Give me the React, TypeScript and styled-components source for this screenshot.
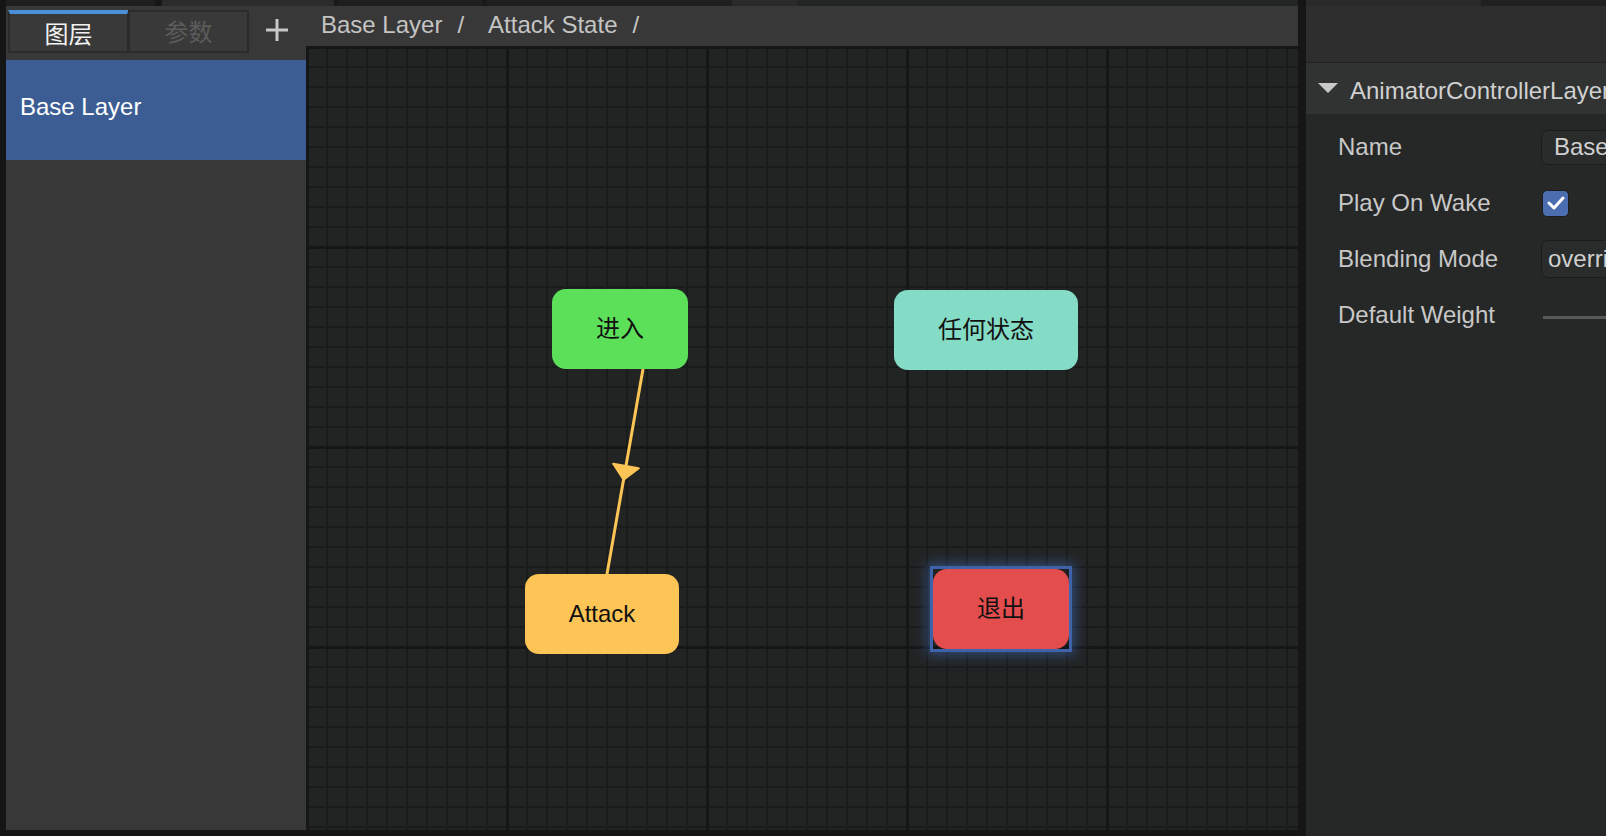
import React from "react";
import styled, { createGlobalStyle } from "styled-components";

const GlobalStyle = createGlobalStyle`
  html, body { margin: 0; padding: 0; background: #151515; }
  body { font-family: "Liberation Sans", Arial, "Noto Sans CJK SC", sans-serif; }
  * { box-sizing: border-box; }
`;

const Screen = styled.div`
  width: 1606px;
  height: 836px;
  overflow: hidden;
  display: flex;
  flex-direction: column;
  background: #151515;
`;

const TopStrip = styled.div`
  display: flex;
  height: 6px;
  flex-shrink: 0;
`;

const StripSeg = styled.div<{ $w: number; $c: string }>`
  width: ${(p) => p.$w}px;
  background: ${(p) => p.$c};
  flex-shrink: 0;
`;

const Body = styled.div`
  display: flex;
  flex: 1;
  min-height: 0;
`;

const EditorArea = styled.div`
  width: 1298px;
  display: flex;
  padding: 0 0 6px 6px;
  background: #151515;
`;

const LayerPanel = styled.div`
  width: 300px;
  background: #383838;
  display: flex;
  flex-direction: column;
`;

const TabBar = styled.div`
  height: 54px;
  display: flex;
  align-items: flex-start;
  padding: 4px 0 0 2px;
`;

const Tab = styled.div<{ $active?: boolean }>`
  width: 121px;
  height: 43px;
  margin-left: ${(p) => (p.$active ? 0 : -1)}px;
  border: 2px solid #2b2b2b;
  border-top: ${(p) => (p.$active ? "4px solid #4a90d9" : "2px solid #2b2b2b")};
  background: #393939;
  display: flex;
  align-items: center;
  justify-content: center;
  font-size: 24px;
  line-height: 1;
  color: ${(p) => (p.$active ? "#f2f2f2" : "#5c5c5c")};
  font-family: "Noto Sans CJK SC", sans-serif;
  padding-bottom: ${(p) => (p.$active ? 0 : 2)}px;
`;

const AddButton = styled.div`
  width: 22px;
  height: 22px;
  margin: 9px 0 0 17px;
  display: flex;
`;

const LayerItem = styled.div<{ $selected?: boolean }>`
  height: 100px;
  background: ${(p) => (p.$selected ? "#3c5d93" : "transparent")};
  color: #ffffff;
  font-size: 24px;
  display: flex;
  align-items: center;
  padding: 0 0 7px 14px;
`;

const GraphArea = styled.div`
  flex: 1;
  display: flex;
  flex-direction: column;
  min-width: 0;
`;

const Breadcrumb = styled.div`
  height: 40px;
  flex-shrink: 0;
  background: #383838;
  display: flex;
  align-items: center;
  padding: 0 0 3px 15px;
  color: #c4c4c4;
  font-size: 24px;
  white-space: nowrap;
`;

const Crumb = styled.span``;

const CrumbSep = styled.span`
  margin: 0 24px 0 15px;
`;

const Canvas = styled.div`
  position: relative;
  flex: 1;
  overflow: hidden;
  background-color: #222424;
  background-image:
    linear-gradient(to right, #151616 0 3px, transparent 3px),
    linear-gradient(to bottom, #151616 0 3px, transparent 3px),
    linear-gradient(to right, #1a1b1b 0 2px, transparent 2px),
    linear-gradient(to bottom, #1a1b1b 0 2px, transparent 2px);
  background-size: 200px 200px, 200px 200px, 20px 20px, 20px 20px;
`;

const EdgeLayer = styled.svg`
  position: absolute;
  left: 0;
  top: 0;
  width: 100%;
  height: 100%;
  pointer-events: none;
`;

const StateNode = styled.div<{
  $x: number;
  $y: number;
  $w: number;
  $bg: string;
  $selected?: boolean;
}>`
  position: absolute;
  left: ${(p) => p.$x}px;
  top: ${(p) => p.$y}px;
  width: ${(p) => p.$w}px;
  height: 80px;
  border-radius: 14px;
  background: ${(p) => p.$bg};
  color: #111111;
  font-size: 24px;
  line-height: 1;
  display: flex;
  align-items: center;
  justify-content: center;
  &::after {
    content: "";
    position: absolute;
    inset: 0;
    display: ${(p) => (p.$selected ? "block" : "none")};
    box-shadow: 0 0 0 3px #3e63a8, 0 0 12px 6px rgba(62, 99, 168, 0.6);
  }
`;

const Separator = styled.div`
  width: 8px;
  background: #161616;
  flex-shrink: 0;
`;

const RightPanel = styled.div`
  width: 300px;
  background: #262727;
  display: flex;
  flex-direction: column;
  overflow: hidden;
`;

const PanelTop = styled.div`
  height: 57px;
  flex-shrink: 0;
  background: #2e2e2e;
  border-bottom: 1px solid #202020;
`;

const SectionHeader = styled.div`
  height: 51px;
  flex-shrink: 0;
  background: #313232;
  display: flex;
  align-items: center;
  gap: 12px;
  padding: 4px 0 0 12px;
  color: #d0d0d0;
  font-size: 24px;
  white-space: nowrap;
`;

const Caret = styled.svg`
  flex-shrink: 0;
  margin-top: -6px;
`;

const PropList = styled.div`
  display: flex;
  flex-direction: column;
  padding: 5px 0 0 32px;
`;

const PropRow = styled.div`
  height: 56px;
  display: grid;
  grid-template-columns: 203px 1fr;
  align-items: center;
`;

const PropLabel = styled.div`
  color: #c8c8c8;
  font-size: 24px;
  white-space: nowrap;
`;

const Field = styled.div<{ $h: number; $pad: number }>`
  width: 140px;
  height: ${(p) => p.$h}px;
  background: #2a2b2b;
  border: 1px solid #1b1c1c;
  border-radius: 7px;
  display: flex;
  align-items: center;
  padding-left: ${(p) => p.$pad}px;
  color: #d0d0d0;
  font-size: 24px;
  white-space: nowrap;
  overflow: hidden;
`;

const CheckBox = styled.div`
  width: 27px;
  height: 27px;
  margin-left: 1px;
  background: #4b6eb1;
  border: 1px solid #1c1c1c;
  border-radius: 5px;
  display: flex;
  align-items: center;
  justify-content: center;
`;

const SliderTrack = styled.div`
  height: 3px;
  width: 120px;
  margin: 4px 0 0 2px;
  background: #575858;
`;

const strip: [number, string][] = [
  [6, "#151515"],
  [149, "#1f1f1f"],
  [7, "#171717"],
  [172, "#2b2b2b"],
  [5, "#1a1a1a"],
  [143, "#1e1e1e"],
  [5, "#181818"],
  [245, "#1f1f1f"],
  [65, "#2a2a2a"],
  [501, "#232525"],
  [8, "#161616"],
  [175, "#2a2a2a"],
  [125, "#202020"],
];

export default function App() {
  return (
    <>
      <GlobalStyle />
      <Screen>
        <TopStrip>
          {strip.map(([w, c], i) => (
            <StripSeg key={i} $w={w} $c={c} />
          ))}
        </TopStrip>
        <Body>
          <EditorArea>
            <LayerPanel>
              <TabBar>
                <Tab $active>图层</Tab>
                <Tab>参数</Tab>
                <AddButton>
                  <svg width="22" height="22" viewBox="0 0 22 22">
                    <rect x="9.5" y="0" width="3" height="22" fill="#c8c8c8" />
                    <rect x="0" y="9.5" width="22" height="3" fill="#c8c8c8" />
                  </svg>
                </AddButton>
              </TabBar>
              <LayerItem $selected>Base Layer</LayerItem>
            </LayerPanel>
            <GraphArea>
              <Breadcrumb>
                <Crumb>Base Layer</Crumb>
                <CrumbSep>/</CrumbSep>
                <Crumb>Attack State</Crumb>
                <CrumbSep>/</CrumbSep>
              </Breadcrumb>
              <Canvas>
                <EdgeLayer>
                  <line
                    x1="337"
                    y1="323"
                    x2="301"
                    y2="528"
                    stroke="#fdc556"
                    strokeWidth="3"
                  />
                  <polygon
                    points="332.8,422.3 307.2,417.7 317.6,433.8"
                    fill="#fdc556"
                    stroke="#fdc556"
                    strokeWidth="2"
                    strokeLinejoin="round"
                  />
                </EdgeLayer>
                <StateNode $x={246} $y={243} $w={136} $bg="#5ce05a">
                  进入
                </StateNode>
                <StateNode $x={588} $y={244} $w={184} $bg="#85dcc6">
                  任何状态
                </StateNode>
                <StateNode $x={219} $y={528} $w={154} $bg="#fdc556">
                  Attack
                </StateNode>
                <StateNode $x={627} $y={523} $w={136} $bg="#e34d4d" $selected>
                  退出
                </StateNode>
              </Canvas>
            </GraphArea>
          </EditorArea>
          <Separator />
          <RightPanel>
            <PanelTop />
            <SectionHeader>
              <Caret width="20" height="10" viewBox="0 0 20 10">
                <polygon points="0,0 20,0 10,10" fill="#c8c8c8" />
              </Caret>
              AnimatorControllerLayer
            </SectionHeader>
            <PropList>
              <PropRow>
                <PropLabel>Name</PropLabel>
                <Field $h={35} $pad={12}>Base Layer</Field>
              </PropRow>
              <PropRow>
                <PropLabel>Play On Wake</PropLabel>
                <CheckBox>
                  <svg width="18" height="14" viewBox="0 0 18 14">
                    <polyline
                      points="2,7 7,12 16,2"
                      fill="none"
                      stroke="#ffffff"
                      strokeWidth="3"
                      strokeLinecap="round"
                      strokeLinejoin="round"
                    />
                  </svg>
                </CheckBox>
              </PropRow>
              <PropRow>
                <PropLabel>Blending Mode</PropLabel>
                <Field $h={38} $pad={6}>override</Field>
              </PropRow>
              <PropRow>
                <PropLabel>Default Weight</PropLabel>
                <SliderTrack />
              </PropRow>
            </PropList>
          </RightPanel>
        </Body>
      </Screen>
    </>
  );
}
